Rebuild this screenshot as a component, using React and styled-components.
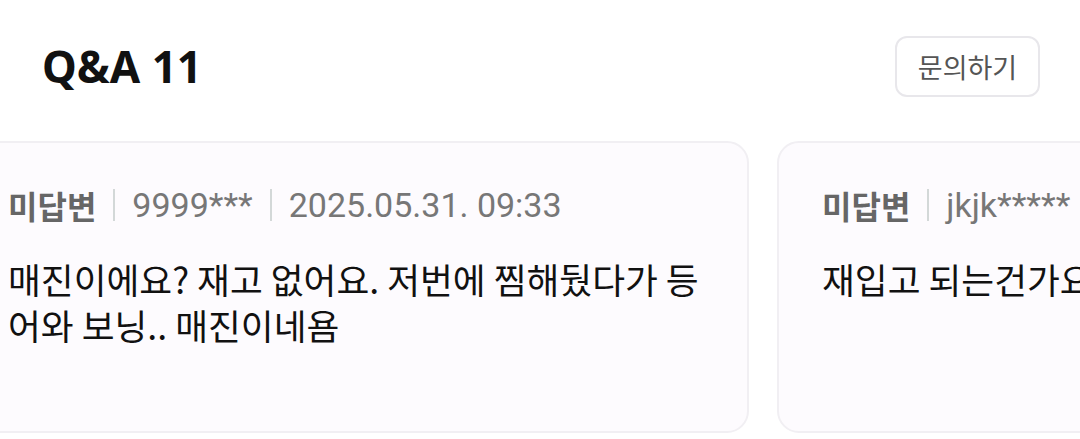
import React from 'react';
import styled, { createGlobalStyle } from 'styled-components';

const GlobalStyle = createGlobalStyle`
  html, body {
    margin: 0;
    padding: 0;
    background: #fff;
    font-family: Roboto, "Noto Sans CJK KR", sans-serif;
  }
`;

const questions = [
  {
    status: '미답변',
    user: '9999***',
    date: '2025.05.31. 09:33',
    body: '매진이에요? 재고 없어요. 저번에 찜해뒀다가 등어와 보닝.. 매진이네욤',
  },
  {
    status: '미답변',
    user: 'jkjk*****',
    date: '2025.05.30. 18:12',
    body: '재입고 되는건가요?',
  },
];

export default function App() {
  return (
    <>
      <GlobalStyle />
      <Page>
        <Header>
          <Title>Q&amp;A 11</Title>
          <AskButton>문의하기</AskButton>
        </Header>
        <Carousel>
          <Track>
            {questions.map((q, i) => (
              <Card key={i}>
                <Meta>
                  <Status>{q.status}</Status>
                  <Divider />
                  <MetaText>{q.user}</MetaText>
                  <Divider />
                  <MetaText>{q.date}</MetaText>
                </Meta>
                <Body>{q.body}</Body>
              </Card>
            ))}
          </Track>
        </Carousel>
      </Page>
    </>
  );
}

const Page = styled.div`
  width: 1080px;
  height: 439px;
  overflow: hidden;
  background: #fff;
`;

const Header = styled.div`
  display: flex;
  align-items: center;
  justify-content: space-between;
  padding: 36px 40px 0 42px;
  height: 60px;
`;

const Title = styled.h1`
  margin: 0;
  font-family: "Noto Sans", "Noto Sans CJK KR", sans-serif;
  font-weight: 700;
  font-size: 44px;
  line-height: 1;
  color: #111;
`;

const AskButton = styled.button`
  box-sizing: border-box;
  width: 145px;
  height: 61px;
  border: 2px solid #e8e7eb;
  border-radius: 12px;
  background: #fff;
  color: #555;
  font-family: "Noto Sans CJK KR", sans-serif;
  font-size: 27px;
  padding: 0;
`;

const Carousel = styled.div`
  overflow: hidden;
  margin-top: 45px;
`;

const Track = styled.div`
  display: flex;
  gap: 28px;
  margin-left: -37px;
`;

const Card = styled.div`
  box-sizing: border-box;
  flex: 0 0 786px;
  min-width: 0;
  overflow: hidden;
  height: 292px;
  padding: 40px 43px;
  background: #fdfbfe;
  border: 2px solid #f1eff3;
  border-radius: 22px;
`;

const Meta = styled.div`
  display: flex;
  align-items: center;
  gap: 17px;
  height: 44px;
`;

const Status = styled.span`
  font-family: "Noto Sans CJK KR", sans-serif;
  font-weight: 700;
  font-size: 32px;
  color: #666;
`;

const Divider = styled.span`
  flex: none;
  width: 2px;
  height: 32px;
  background: #d3d8d8;
`;

const MetaText = styled.span`
  font-family: Roboto, "Noto Sans CJK KR", sans-serif;
  font-size: 34px;
  color: #777;
  white-space: nowrap;
`;

const Body = styled.p`
  margin: 29px 0 0;
  font-family: "Noto Sans CJK KR", sans-serif;
  font-size: 35.7px;
  line-height: 46px;
  color: #111;
`;
